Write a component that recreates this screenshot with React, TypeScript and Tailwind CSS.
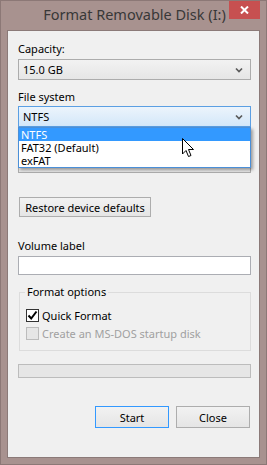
import React from "react";

const font = { fontFamily: "'Noto Sans', 'Open Sans', sans-serif" };

function Chevron() {
  return (
    <svg width="8" height="6" viewBox="0 0 8 6" className="shrink-0">
      <path d="M1 1.5 L4 4.5 L7 1.5" fill="none" stroke="#5a5a5a" strokeWidth="1.7" />
    </svg>
  );
}

function Combo({ value, focused }: { value: string; focused?: boolean }) {
  return (
    <div
      className={
        "h-[21px] flex items-center justify-between pl-[4px] pr-[7px] border " +
        (focused
          ? "border-[#5b9fe3] bg-gradient-to-b from-[#ecf4fc] to-[#d3e7f9]"
          : "border-[#acacac] bg-gradient-to-b from-[#f2f2f2] to-[#e6e6e6]")
      }
    >
      <span className="text-[11px] leading-none text-black">{value}</span>
      <Chevron />
    </div>
  );
}

function Cursor() {
  return (
    <svg width="14" height="21" viewBox="0 0 14 21" className="absolute left-[163px] top-[10px]">
      <path
        d="M0.5 0.5 L0.5 16 L4 12.5 L6.5 18.5 L9 17.5 L6.5 11.5 L11.5 11.5 Z"
        fill="#fff"
        stroke="#000"
        strokeWidth="1"
      />
    </svg>
  );
}

export default function App() {
  return (
    <div style={font} className="w-[267px] h-[465px] bg-[#a8928f] flex flex-col border border-[#8c7876]">
      <div className="relative h-[29px] flex items-center justify-center shrink-0">
        <span className="text-[14.5px] text-[#383838] leading-none -mt-[2px] ml-[2px]">Format Removable Disk (I:)</span>
        <div className="absolute right-[6px] top-0 w-[31px] h-[18px] bg-[#c75050] flex items-center justify-center">
          <svg width="9" height="8" viewBox="0 0 9 8">
            <path d="M1 0.5 L8 7.5 M8 0.5 L1 7.5" stroke="#fff" strokeWidth="2" />
          </svg>
        </div>
      </div>
      <div className="mx-[6px] h-[428px] border border-[#8b7a78] bg-[#f0f0f0] pl-[10px] pr-[8px] pt-[9px] text-[11px] text-black">
        <div className="h-[17px] leading-[17px]">Capacity:</div>
        <div className="mt-[2px]">
          <Combo value="15.0 GB" />
        </div>
        <div className="mt-[8px] h-[17px] leading-[17px]">File system</div>
        <div className="mt-[1px] relative">
          <Combo value="NTFS" focused />
          <div className="absolute left-0 right-0 top-[21px] z-10 bg-white border border-[#4a8fd8] shadow-[2px_2px_3px_rgba(0,0,0,0.35)]">
            <div className="h-[13px] leading-[13px] pl-[2px] bg-[#3399ff] text-white">NTFS</div>
            <div className="h-[13px] leading-[13px] pl-[2px]">FAT32 (Default)</div>
            <div className="h-[13px] leading-[13px] pl-[2px]">exFAT</div>
            <Cursor />
          </div>
        </div>
        <div className="mt-[8px] h-[16px]" />
        <div className="mt-[1px]">
          <Combo value="" />
        </div>
        <button className="mt-[24px] ml-[1px] h-[20px] w-[132px] border border-[#adadad] bg-gradient-to-b from-[#f2f2f2] to-[#e5e5e5] text-[11px] leading-none">
          Restore device defaults
        </button>
        <div className="mt-[21px] h-[16px] leading-[16px]">Volume label</div>
        <div className="mt-[2px] h-[19px] bg-white border border-[#abadb3]" />
        <div className="mt-[17px] ml-[1px] relative border border-[#dcdcdc] h-[59px] pt-[10px] pl-[6px]">
          <span className="absolute -top-[9px] left-[5px] px-[2px] bg-[#f0f0f0] leading-[16px]">Format options</span>
          <div className="flex items-center gap-[3px] h-[13px] mt-[6px]">
            <div className="w-[13px] h-[13px] border border-[#333] bg-white flex items-center justify-center">
              <svg width="11" height="11" viewBox="0 0 11 11">
                <path d="M1.5 5.5 L4.2 8.5 L9.5 1.5" fill="none" stroke="#000" strokeWidth="2" />
              </svg>
            </div>
            <span className="leading-none">Quick Format</span>
          </div>
          <div className="flex items-center gap-[3px] h-[13px] mt-[5px]">
            <div className="w-[13px] h-[13px] border border-[#bcbcbc] bg-[#e6e6e6]" />
            <span className="leading-none text-[#a0a0a0]">Create an MS-DOS startup disk</span>
          </div>
        </div>
        <div className="mt-[13px] h-[14px] border border-[#bcbcbc] bg-[#e6e6e6]" />
        <div className="mt-[28px] flex justify-end gap-[7px] pr-[1px]">
          <button className="w-[74px] h-[22px] border border-[#3399ff] bg-gradient-to-b from-[#f2f2f2] to-[#e5e5e5] text-[11px] leading-none">
            Start
          </button>
          <button className="w-[74px] h-[22px] border border-[#adadad] bg-gradient-to-b from-[#f2f2f2] to-[#e5e5e5] text-[11px] leading-none">
            Close
          </button>
        </div>
      </div>
    </div>
  );
}
